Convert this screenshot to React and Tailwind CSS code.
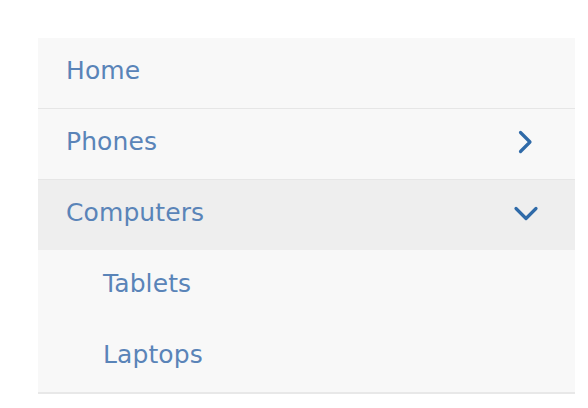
import React, { useState } from 'react';

const items = [
  { label: 'Home' },
  { label: 'Phones', children: [{ label: 'iPhone' }, { label: 'Android' }] },
  { label: 'Computers', children: [{ label: 'Tablets' }, { label: 'Laptops' }] },
];

const Chevron = ({ open }) => (
  <svg width="28" height="28" viewBox="0 0 28 28" fill="none" stroke="#2f6aa8" strokeWidth="3.2" strokeLinecap="round" strokeLinejoin="round">
    {open ? <path d="M4 9.5l10 10 10-10" /> : <path d="M8.5 4.5l9.5 9.5-9.5 9.5" />}
  </svg>
);

const App = () => {
  const [openKey, setOpenKey] = useState('Computers');

  return (
    <div className="w-[588px] h-[408px] bg-white pt-[38px] pl-[38px] pr-[13px]" style={{ fontFamily: '"DejaVu Sans", sans-serif' }}>
      <nav className="bg-[#f8f8f8] border-b-2 border-[#e8e8e8]">
        {items.map((item, i) => {
          const open = openKey === item.label;
          return (
            <div key={item.label} className={i > 0 ? 'border-t border-[#e6e6e6]' : ''}>
              <button
                type="button"
                onClick={() => item.children && setOpenKey(open ? null : item.label)}
                className={`w-full h-[70px] flex items-center justify-between pl-[28px] pr-[35px] pb-[4px] text-[25px] tracking-[0.1px] text-[#5a84b8] ${open ? 'bg-[#eeeeee]' : ''}`}
              >
                <span>{item.label}</span>
                {item.children && <Chevron open={open} />}
              </button>
              {open && item.children && (
                <div>
                  {item.children.map(c => (
                    <div key={c.label} className="h-[71px] flex items-center pl-[65px] pb-[4px] text-[25px] tracking-[0.1px] text-[#5a84b8]">
                      {c.label}
                    </div>
                  ))}
                </div>
              )}
            </div>
          );
        })}
      </nav>
    </div>
  );
};

export default App;
